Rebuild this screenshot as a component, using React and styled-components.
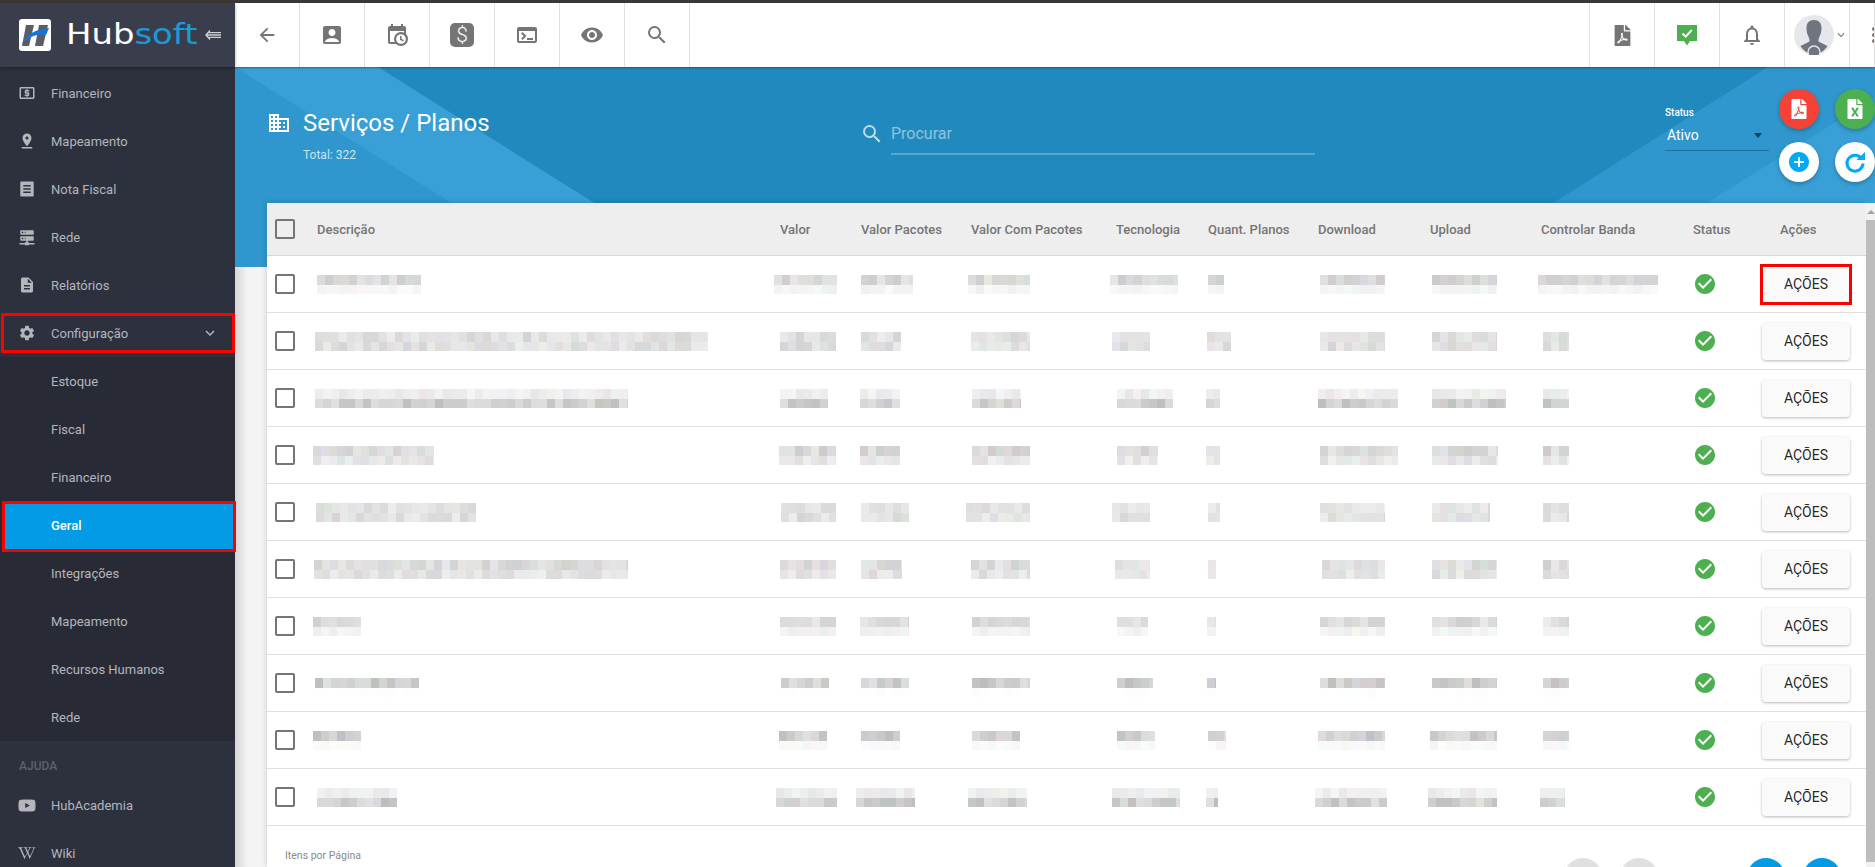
import React from "react";
import styled, { createGlobalStyle } from "styled-components";
import {
  MdAccountBox,
  MdAddCircle,
  MdArrowBack,
  MdCheckCircle,
  MdDescription,
  MdDomain,
  MdExpandMore,
  MdKeyboardArrowDown,
  MdLocalAtm,
  MdMoreVert,
  MdOutlineNotifications,
  MdPinDrop,
  MdSearch,
  MdSettings,
  MdTerminal,
  MdVisibility,
} from "react-icons/md";
import { FaFileExcel, FaFilePdf, FaWikipediaW, FaYoutube } from "react-icons/fa";

const TABLE_COLUMNS = "50px 463px 81px 110px 145px 92px 110px 112px 111px 152px 87px 1fr";
const COLUMN_STARTS = [317, 780, 861, 971, 1116, 1208, 1318, 1430, 1541];

const GlobalStyle = createGlobalStyle`
  html, body {
    margin: 0;
    height: 100%;
    overflow: hidden;
    background: #3b3734;
    font-family: Roboto, "Liberation Sans", sans-serif;
  }
  #root {
    height: 100%;
  }
  * {
    box-sizing: border-box;
  }
`;

const Shell = styled.div`
  display: flex;
  height: 100vh;
  padding-top: 3px;
  overflow: hidden;
`;

const Sidebar = styled.aside`
  position: relative;
  z-index: 3;
  flex: 0 0 235px;
  display: flex;
  flex-direction: column;
  background: #2d303d;
`;

const Brand = styled.div`
  flex: 0 0 64px;
  display: flex;
  align-items: center;
  padding-left: 19px;
  background: #3a3e4c;
  box-shadow: 0 1px 3px rgba(0, 0, 0, 0.35);
`;

const BrandName = styled.span`
  margin-left: 15px;
  width: 139px;
  font-family: "DejaVu Sans", sans-serif;
  font-size: 28px;
  line-height: 1;
  color: #fff;
  transform: scaleX(1.21);
  transform-origin: left center;
`;

const BrandAccent = styled.span`
  color: #1a9ad9;
`;

const Menu = styled.nav`
  padding-top: 2px;
  color: #b4b6bc;
`;

const MenuItem = styled.a`
  position: relative;
  display: flex;
  align-items: center;
  height: 48px;
  padding-left: 18px;
  font-size: 13px;
  color: #b4b6bc;

  > svg:first-child {
    flex: 0 0 18px;
    margin-right: 15px;
  }

  ${(p) =>
    p.$marked &&
    `
    &::after {
      content: "";
      position: absolute;
      inset: 4px 0 4px 1px;
      border: 3px solid #f00;
    }
  `}
`;

const MenuChevron = styled.span`
  margin-left: auto;
  margin-right: 16px;
  display: flex;
`;

const SubMenu = styled.div`
  background: #282b36;
`;

const SubItem = styled.a`
  display: flex;
  align-items: center;
  height: 48px;
  padding-left: 51px;
  font-size: 13px;
  color: #b4b6bc;
`;

const ActiveSubItem = styled(SubItem)`
  height: 51px;
  width: 234px;
  margin: 0 -1px -3px 2px;
  padding: 0 0 2px 46px;
  border: 3px solid #f00;
  background: #039be5;
  color: #fff;
  font-weight: 500;
  position: relative;
`;

const SectionLabel = styled.div`
  height: 40px;
  padding: 17px 0 0 19px;
  font-size: 12px;
  line-height: 16px;
  font-weight: 500;
  color: #5d616e;
`;

const Main = styled.main`
  flex: 1;
  min-width: 0;
  display: flex;
  flex-direction: column;
  background: linear-gradient(90deg, #d6d6d6, #f4f4f4 13px);
`;

const Toolbar = styled.header`
  position: relative;
  z-index: 2;
  flex: 0 0 64px;
  display: flex;
  background: #fff;
  box-shadow: 0 1px 2px rgba(0, 0, 0, 0.35);
  color: #757575;
`;

const ToolCell = styled.div`
  flex: 0 0 ${(p) => p.$width || 65}px;
  min-width: 0;
  overflow: hidden;
  display: flex;
  align-items: center;
  justify-content: ${(p) => p.$justify || "center"};
  padding-left: ${(p) => p.$pad || 0}px;
  border-right: 1px solid #e0e0e0;

  svg {
    flex-shrink: 0;
  }
`;

const ToolSpacer = styled.div`
  flex: 1;
  border-right: 1px solid #e0e0e0;
`;

const DollarBadge = styled.span`
  display: flex;
  align-items: center;
  justify-content: center;
  width: 24px;
  height: 24px;
  border-radius: 5px;
  background: #757575;
  color: #fff;
  font-size: 21px;
  font-weight: 300;
`;

const Hero = styled.section`
  position: relative;
  flex: 0 0 200px;
  display: grid;
  grid-template-columns: 591px 805px 114px 1fr;
  padding-left: 34px;
  background: #2089bd;
  color: #fff;
  overflow: hidden;
`;

const HeroShape = styled.div`
  position: absolute;
  inset: 0;
  background: ${(p) => p.$color};
  clip-path: polygon(${(p) => p.$points});
`;

const HeroTitle = styled.div`
  position: relative;
  display: grid;
  grid-template-columns: 34px 1fr;
  align-content: start;
  padding-top: 42px;
`;

const Title = styled.h1`
  margin: 0;
  font-size: 24px;
  font-weight: 400;
  line-height: 28px;
`;

const Total = styled.div`
  grid-column: 2;
  margin-top: 11px;
  font-size: 12px;
  line-height: 14px;
  color: rgba(255, 255, 255, 0.75);
`;

const TitleIcon = styled.span`
  display: flex;
  align-items: center;
  margin-left: -2px;
`;

const Search = styled.div`
  position: relative;
  display: flex;
  align-items: flex-start;
  padding-top: 55px;
  color: rgba(255, 255, 255, 0.7);
`;

const SearchField = styled.div`
  width: 424px;
  height: 33px;
  margin-left: 7px;
  padding-top: 1px;
  border-bottom: 2px solid rgba(255, 255, 255, 0.25);
  font-size: 16px;
  line-height: 22px;
  color: rgba(255, 255, 255, 0.5);
`;

const StatusFilter = styled.div`
  position: relative;
  width: 104px;
  height: 44px;
  margin-top: 40px;
  border-bottom: 1px solid rgba(0, 40, 70, 0.35);
`;

const FilterLabel = styled.div`
  font-size: 10px;
  line-height: 12px;
  font-weight: 500;
`;

const FilterValue = styled.div`
  display: flex;
  align-items: center;
  justify-content: space-between;
  margin-top: 6px;
  padding: 0 7px 0 2px;
  font-size: 14px;
  line-height: 20px;
`;

const FilterCaret = styled.span`
  width: 0;
  height: 0;
  border-left: 4.5px solid transparent;
  border-right: 4.5px solid transparent;
  border-top: 5px solid rgba(0, 30, 50, 0.7);
`;

const FabGrid = styled.div`
  position: relative;
  display: grid;
  grid-template-columns: 40px 40px;
  grid-auto-rows: 40px;
  gap: 13px 16px;
  align-content: start;
  padding-top: 22px;
`;

const Fab = styled.button`
  display: flex;
  align-items: center;
  justify-content: center;
  width: 40px;
  height: 40px;
  padding: 0;
  border: 0;
  border-radius: 50%;
  background: ${(p) => p.$bg};
  color: ${(p) => p.$color || "#fff"};
  box-shadow: 0 2px 4px rgba(0, 0, 0, 0.25);
`;

const Content = styled.div`
  position: relative;
  z-index: 1;
  flex: 1;
  min-height: 0;
  display: flex;
  margin-top: -64px;
`;

const Card = styled.div`
  flex: 1;
  min-width: 0;
  margin-left: 32px;
  background: #fff;
  box-shadow: 0 0 6px rgba(0, 0, 0, 0.18);
`;

const Scrollbar = styled.div`
  flex: 0 0 9px;
  display: flex;
  flex-direction: column;
  align-items: center;
  background: #f1f1f1;
`;

const ScrollArrow = styled.span`
  width: 0;
  height: 0;
  margin: 7px 0 6px;
  border-left: 4px solid transparent;
  border-right: 4px solid transparent;
  border-bottom: 4px solid #a3a3a3;
`;

const ScrollThumb = styled.span`
  width: 100%;
  height: 642px;
  background: #bdbdbd;
`;

const HeadRow = styled.div`
  display: grid;
  grid-template-columns: ${TABLE_COLUMNS};
  align-items: center;
  height: 53px;
  background: #eee;
  border-bottom: 1px solid #d6d6d6;
  font-size: 13px;
  font-weight: 500;
  color: #757575;
`;

const Row = styled.div`
  display: grid;
  grid-template-columns: ${TABLE_COLUMNS};
  align-items: center;
  height: 57px;
  border-bottom: 1px solid #e0e0e0;
`;

const Check = styled.span`
  display: block;
  width: 20px;
  height: 20px;
  margin-left: 8px;
  border: 2px solid #757575;
  border-radius: 2px;
  background: transparent;
`;

const Mosaic = styled.svg`
  display: block;
  margin-left: ${(p) => p.$dx}px;
  transform: translateY(${(p) => p.$dy || 0}px);
`;

const StatusCell = styled.div`
  display: flex;
  color: #4caf50;
`;

const ActionButton = styled.button`
  width: 88px;
  height: 37px;
  margin-left: -18px;
  padding: 0;
  border: 0;
  border-radius: 4px;
  background: #fafafa;
  box-shadow: 0 1px 3px rgba(0, 0, 0, 0.28);
  font-family: inherit;
  font-size: 14px;
  font-weight: 400;
  color: rgba(0, 0, 0, 0.87);
  ${(p) => p.$marked && "outline: 3px solid #f00; outline-offset: -1px; box-shadow: none; border-radius: 0;"}
`;

const Footer = styled.div`
  display: flex;
  justify-content: space-between;
  padding: 24px 25px 0 18px;
`;

const PageSize = styled.div`
  font-size: 10.5px;
  line-height: 12px;
  color: #8a8a8a;
`;

const Pager = styled.div`
  display: flex;
  gap: 18px;
  margin-top: 8px;
`;

const PagerButton = styled.span`
  width: 38px;
  height: 38px;
  margin-left: ${(p) => p.$gap || 0}px;
  border-radius: 50%;
  background: ${(p) => (p.$on ? "#039be5" : "#e0e0e0")};
`;

function LogoMark() {
  return (
    <svg width="32" height="32" viewBox="0 0 32 32">
      <rect width="32" height="32" rx="3" fill="#fff" />
      <polygon points="7,6 15,6 10,27 3,27" fill="#5b5d63" />
      <polygon points="20,6 29,6 24,27 16,27" fill="#5b5d63" />
      <path d="M3 25C7 16 14 11 30 9L27 16C18 14 10 18 3 25Z" fill="#1376d6" />
    </svg>
  );
}

function CollapseIcon() {
  return (
    <svg width="16" height="10" viewBox="0 0 16 10" fill="none" stroke="#cfd0d4" strokeWidth="1.3">
      <path d="M5 .5 .9 5 5 9.5M3 2.6h13M1.500 5H16M3 7.400h13" />
    </svg>
  );
}

function CalendarClockIcon() {
  return (
    <svg width="24" height="24" viewBox="0 0 24 24" fill="currentColor">
      <path d="M15,13H16.5V15.82L18.94,17.23L18.19,18.53L15,16.69V13M19,8H5V19H9.67C9.24,18.09 9,17.07 9,16A7,7 0 0,1 16,9C17.07,9 18.09,9.24 19,9.67V8M5,21C3.89,21 3,20.1 3,19V5C3,3.89 3.89,3 5,3H6V1H8V3H16V1H18V3H19A2,2 0 0,1 21,5V11.1C22.24,12.36 23,14.09 23,16A7,7 0 0,1 16,23C14.09,23 12.36,22.24 11.1,21H5M16,11.15A4.85,4.85 0 0,0 11.15,16C11.15,18.68 13.32,20.85 16,20.85A4.85,4.85 0 0,0 20.85,16C20.85,13.32 18.68,11.15 16,11.15Z" />
    </svg>
  );
}

function ServerIcon() {
  return (
    <svg width="18" height="18" viewBox="0 0 24 24" fill="currentColor">
      <path d="M13,19H14A1,1 0 0,1 15,20H22V22H15A1,1 0 0,1 14,23H10A1,1 0 0,1 9,22H2V20H9A1,1 0 0,1 10,19H11V17H4A1,1 0 0,1 3,16V12A1,1 0 0,1 4,11H20A1,1 0 0,1 21,12V16A1,1 0 0,1 20,17H13V19M4,3H20A1,1 0 0,1 21,4V8A1,1 0 0,1 20,9H4A1,1 0 0,1 3,8V4A1,1 0 0,1 4,3M9,7H10V5H9V7M9,15H10V13H9V15M5,5V7H7V5H5M5,13V15H7V13H5Z" />
    </svg>
  );
}

function MessageCheckIcon() {
  return (
    <svg width="24" height="24" viewBox="0 0 24 24">
      <path d="M2 2h20v16h-7l-3 4.500L9 18H2z" fill="#4caf50" />
      <path d="M7.500 10.500 10.700 13.600 16.800 7" fill="none" stroke="#fff" strokeWidth="2" />
    </svg>
  );
}

function AvatarIcon() {
  return (
    <svg width="40" height="40" viewBox="0 0 40 40">
      <circle cx="20" cy="20" r="20" fill="#e6e7eb" />
      <path d="M20 5c-5 0-7.500 3-7.500 8 0 3 .6 5.500 1.500 7.500 1 2 1.600 3.500 1.500 6L6.500 31c3 5 8 8 13.500 8s10.500-3 13.500-8l-9-4.500c-.1-2.500.5-4 1.500-6 .9-2 1.500-4.500 1.500-7.500 0-5-2.500-8-7.500-8z" fill="#6f757e" />
      <circle cx="20" cy="37" r="6" fill="#6f757e" stroke="#e6e7eb" strokeWidth="1.4" />
    </svg>
  );
}

function NotaIcon() {
  return (
    <svg width="18" height="18" viewBox="0 0 18 18">
      <path d="M3 1.500h12a.7.7 0 0 1 .7.7v13.600a.7.7 0 0 1-.7.7H3a.7.7 0 0 1-.7-.7V2.200a.7.7 0 0 1 .7-.7zM5.300 5v1.500h7.400V5zm0 3.300v1.500h7.400V8.300zm0 3.300v1.500h7.400v-1.500z" fill="currentColor" fillRule="evenodd" />
    </svg>
  );
}

function RefreshIcon() {
  return (
    <svg width="24" height="24" viewBox="0 0 24 24">
      <path d="M18.500 8.500A8 8 0 1 0 20 13.500" fill="none" stroke="currentColor" strokeWidth="3" />
      <polygon points="13.500,10 22,10 22,2" fill="currentColor" />
    </svg>
  );
}

// pixelated cell, the reference has the values blurred out
function seeded(seed) {
  let s = seed;
  return () => {
    s = (s * 16807) % 2147483647;
    return (s % 1000) / 1000;
  };
}

function Blur({ from, column, width, tones, seed, dy }) {
  const rnd = seeded(seed * 7919 + 11);
  const count = Math.ceil(width / 8);
  const rects = [];
  tones.forEach((tone, line) => {
    for (let i = 0; i < count; i++) {
      const depth = tone * 78 * (0.55 + rnd() * 0.65);
      const tint = () => Math.round(255 - depth + (rnd() - 0.5) * 7);
      rects.push(
        <rect
          key={`${line}-${i}`}
          x={i * 8}
          y={line * 9.5}
          width="8"
          height="9.5"
          fill={`rgb(${tint()},${tint()},${tint()})`}
        />
      );
    }
  });
  return (
    <Mosaic
      $dx={from - COLUMN_STARTS[column]}
      $dy={dy}
      width={width}
      height="19"
      viewBox={`0 0 ${width} 19`}
      shapeRendering="crispEdges"
    >
      {rects}
    </Mosaic>
  );
}

const heads = [
  "Descrição",
  "Valor",
  "Valor Pacotes",
  "Valor Com Pacotes",
  "Tecnologia",
  "Quant. Planos",
  "Download",
  "Upload",
  "Controlar Banda",
  "Status",
  "Ações",
];

const rows = [
  { tones: [0.55, 0.15], cells: [[317, 421], [774, 837], [861, 913], [968, 1030], [1110, 1178], [1208, 1224], [1320, 1385], [1432, 1497], [1538, 1658]] },
  { tones: [0.45, 0.45], cells: [[315, 708], [780, 836], [861, 901], [971, 1030], [1112, 1150], [1207, 1231], [1320, 1385], [1432, 1497], [1543, 1569]] },
  { tones: [0.25, 0.7], cells: [[315, 628], [780, 828], [860, 900], [972, 1021], [1117, 1173], [1206, 1220], [1318, 1398], [1432, 1506], [1543, 1569]] },
  { tones: [0.55, 0.35], cells: [[313, 434], [779, 836], [860, 900], [972, 1030], [1117, 1158], [1206, 1220], [1320, 1398], [1432, 1498], [1543, 1569]] },
  { tones: [0.4, 0.45], cells: [[316, 476], [781, 836], [861, 909], [966, 1030], [1112, 1150], [1208, 1220], [1320, 1385], [1432, 1490], [1543, 1569]] },
  { tones: [0.5, 0.4], cells: [[314, 628], [780, 836], [861, 902], [971, 1030], [1115, 1150], [1208, 1216], [1322, 1385], [1432, 1497], [1543, 1569]] },
  { tones: [0.5, 0.2], cells: [[313, 361], [780, 836], [860, 909], [972, 1030], [1117, 1148], [1207, 1216], [1320, 1385], [1432, 1497], [1543, 1569]] },
  { tones: [0.7, 0], dy: 4, cells: [[315, 419], [781, 829], [861, 909], [972, 1030], [1117, 1153], [1207, 1216], [1320, 1385], [1432, 1497], [1543, 1569]] },
  { tones: [0.7, 0.1], cells: [[313, 361], [779, 827], [861, 900], [972, 1020], [1117, 1155], [1208, 1226], [1318, 1385], [1430, 1497], [1543, 1569]] },
  { tones: [0.25, 0.7], cells: [[317, 397], [776, 837], [856, 915], [968, 1027], [1112, 1180], [1206, 1218], [1315, 1387], [1428, 1497], [1540, 1565]] },
];

const subItems = ["Estoque", "Fiscal", "Financeiro", "Geral", "Integrações", "Mapeamento", "Recursos Humanos", "Rede"];

function App() {
  return (
    <>
      <GlobalStyle />
      <Shell>
        <Sidebar>
          <Brand>
            <LogoMark />
            <BrandName>
              Hub<BrandAccent>soft</BrandAccent>
            </BrandName>
            <CollapseIcon />
          </Brand>
          <Menu>
            <MenuItem><MdLocalAtm size={18} />Financeiro</MenuItem>
            <MenuItem><MdPinDrop size={18} />Mapeamento</MenuItem>
            <MenuItem><NotaIcon />Nota Fiscal</MenuItem>
            <MenuItem><ServerIcon />Rede</MenuItem>
            <MenuItem><MdDescription size={18} />Relatórios</MenuItem>
            <MenuItem $marked>
              <MdSettings size={18} />
              Configuração
              <MenuChevron><MdKeyboardArrowDown size={18} /></MenuChevron>
            </MenuItem>
            <SubMenu>
              {subItems.map((item) =>
                item === "Geral" ? (
                  <ActiveSubItem key={item}>{item}</ActiveSubItem>
                ) : (
                  <SubItem key={item}>{item}</SubItem>
                )
              )}
            </SubMenu>
            <SectionLabel>AJUDA</SectionLabel>
            <MenuItem><FaYoutube size={17} />HubAcademia</MenuItem>
            <MenuItem><FaWikipediaW size={14} />Wiki</MenuItem>
          </Menu>
        </Sidebar>

        <Main>
          <Toolbar>
            <ToolCell><MdArrowBack size={22} /></ToolCell>
            <ToolCell><MdAccountBox size={24} /></ToolCell>
            <ToolCell><CalendarClockIcon /></ToolCell>
            <ToolCell><DollarBadge>$</DollarBadge></ToolCell>
            <ToolCell><MdTerminal size={24} /></ToolCell>
            <ToolCell><MdVisibility size={24} /></ToolCell>
            <ToolCell><MdSearch size={24} /></ToolCell>
            <ToolSpacer />
            <ToolCell><FaFilePdf size={21} /></ToolCell>
            <ToolCell><MessageCheckIcon /></ToolCell>
            <ToolCell><MdOutlineNotifications size={24} /></ToolCell>
            <ToolCell $justify="flex-start" $pad={9}>
              <AvatarIcon />
              <MdExpandMore size={14} />
            </ToolCell>
            <ToolCell $width={25} $justify="flex-start" $pad={12}>
              <MdMoreVert size={24} color="#8a6f5c" />
            </ToolCell>
          </Toolbar>

          <Hero>
            <HeroShape $color="#38a0d6" $points="0 0, 143px 0, 461px 200px, 0 200px" />
            <HeroShape $color="#2f97cd" $points="0 0, 318px 200px, 0 200px" />
            <HeroShape $color="#2f97cd" $points="1533px 0, 1640px 0, 1640px 200px, 1217px 200px" />
            <HeroShape $color="#38a0d6" $points="1640px 30px, 1640px 200px, 1371px 200px" />
            <HeroTitle>
              <TitleIcon><MdDomain size={24} /></TitleIcon>
              <Title>Serviços / Planos</Title>
              <Total>Total: 322</Total>
            </HeroTitle>
            <Search>
              <MdSearch size={24} />
              <SearchField>Procurar</SearchField>
            </Search>
            <StatusFilter>
              <FilterLabel>Status</FilterLabel>
              <FilterValue>
                Ativo
                <FilterCaret />
              </FilterValue>
            </StatusFilter>
            <FabGrid>
              <Fab $bg="#f44336"><FaFilePdf size={20} /></Fab>
              <Fab $bg="#4caf50"><FaFileExcel size={20} /></Fab>
              <Fab $bg="#fff" $color="#03a9f4"><MdAddCircle size={24} /></Fab>
              <Fab $bg="#fff" $color="#03a9f4"><RefreshIcon /></Fab>
            </FabGrid>
          </Hero>

          <Content>
            <Card>
              <HeadRow>
                <Check />
                {heads.map((head) => (
                  <div key={head}>{head}</div>
                ))}
              </HeadRow>
              {rows.map((row, r) => (
                <Row key={r}>
                  <Check />
                  {row.cells.map(([from, to], c) => (
                    <Blur
                      key={c}
                      from={from}
                      column={c}
                      width={to - from}
                      tones={row.tones}
                      dy={row.dy}
                      seed={r * 20 + c + 1}
                    />
                  ))}
                  <StatusCell><MdCheckCircle size={24} /></StatusCell>
                  <ActionButton $marked={r === 0}>AÇÕES</ActionButton>
                </Row>
              ))}
              <Footer>
                <PageSize>Itens por Página</PageSize>
                <Pager>
                  <PagerButton />
                  <PagerButton />
                  <PagerButton $on $gap={71} />
                  <PagerButton $on />
                </Pager>
              </Footer>
            </Card>
            <Scrollbar>
              <ScrollArrow />
              <ScrollThumb />
            </Scrollbar>
          </Content>
        </Main>
      </Shell>
    </>
  );
}

export default App;
